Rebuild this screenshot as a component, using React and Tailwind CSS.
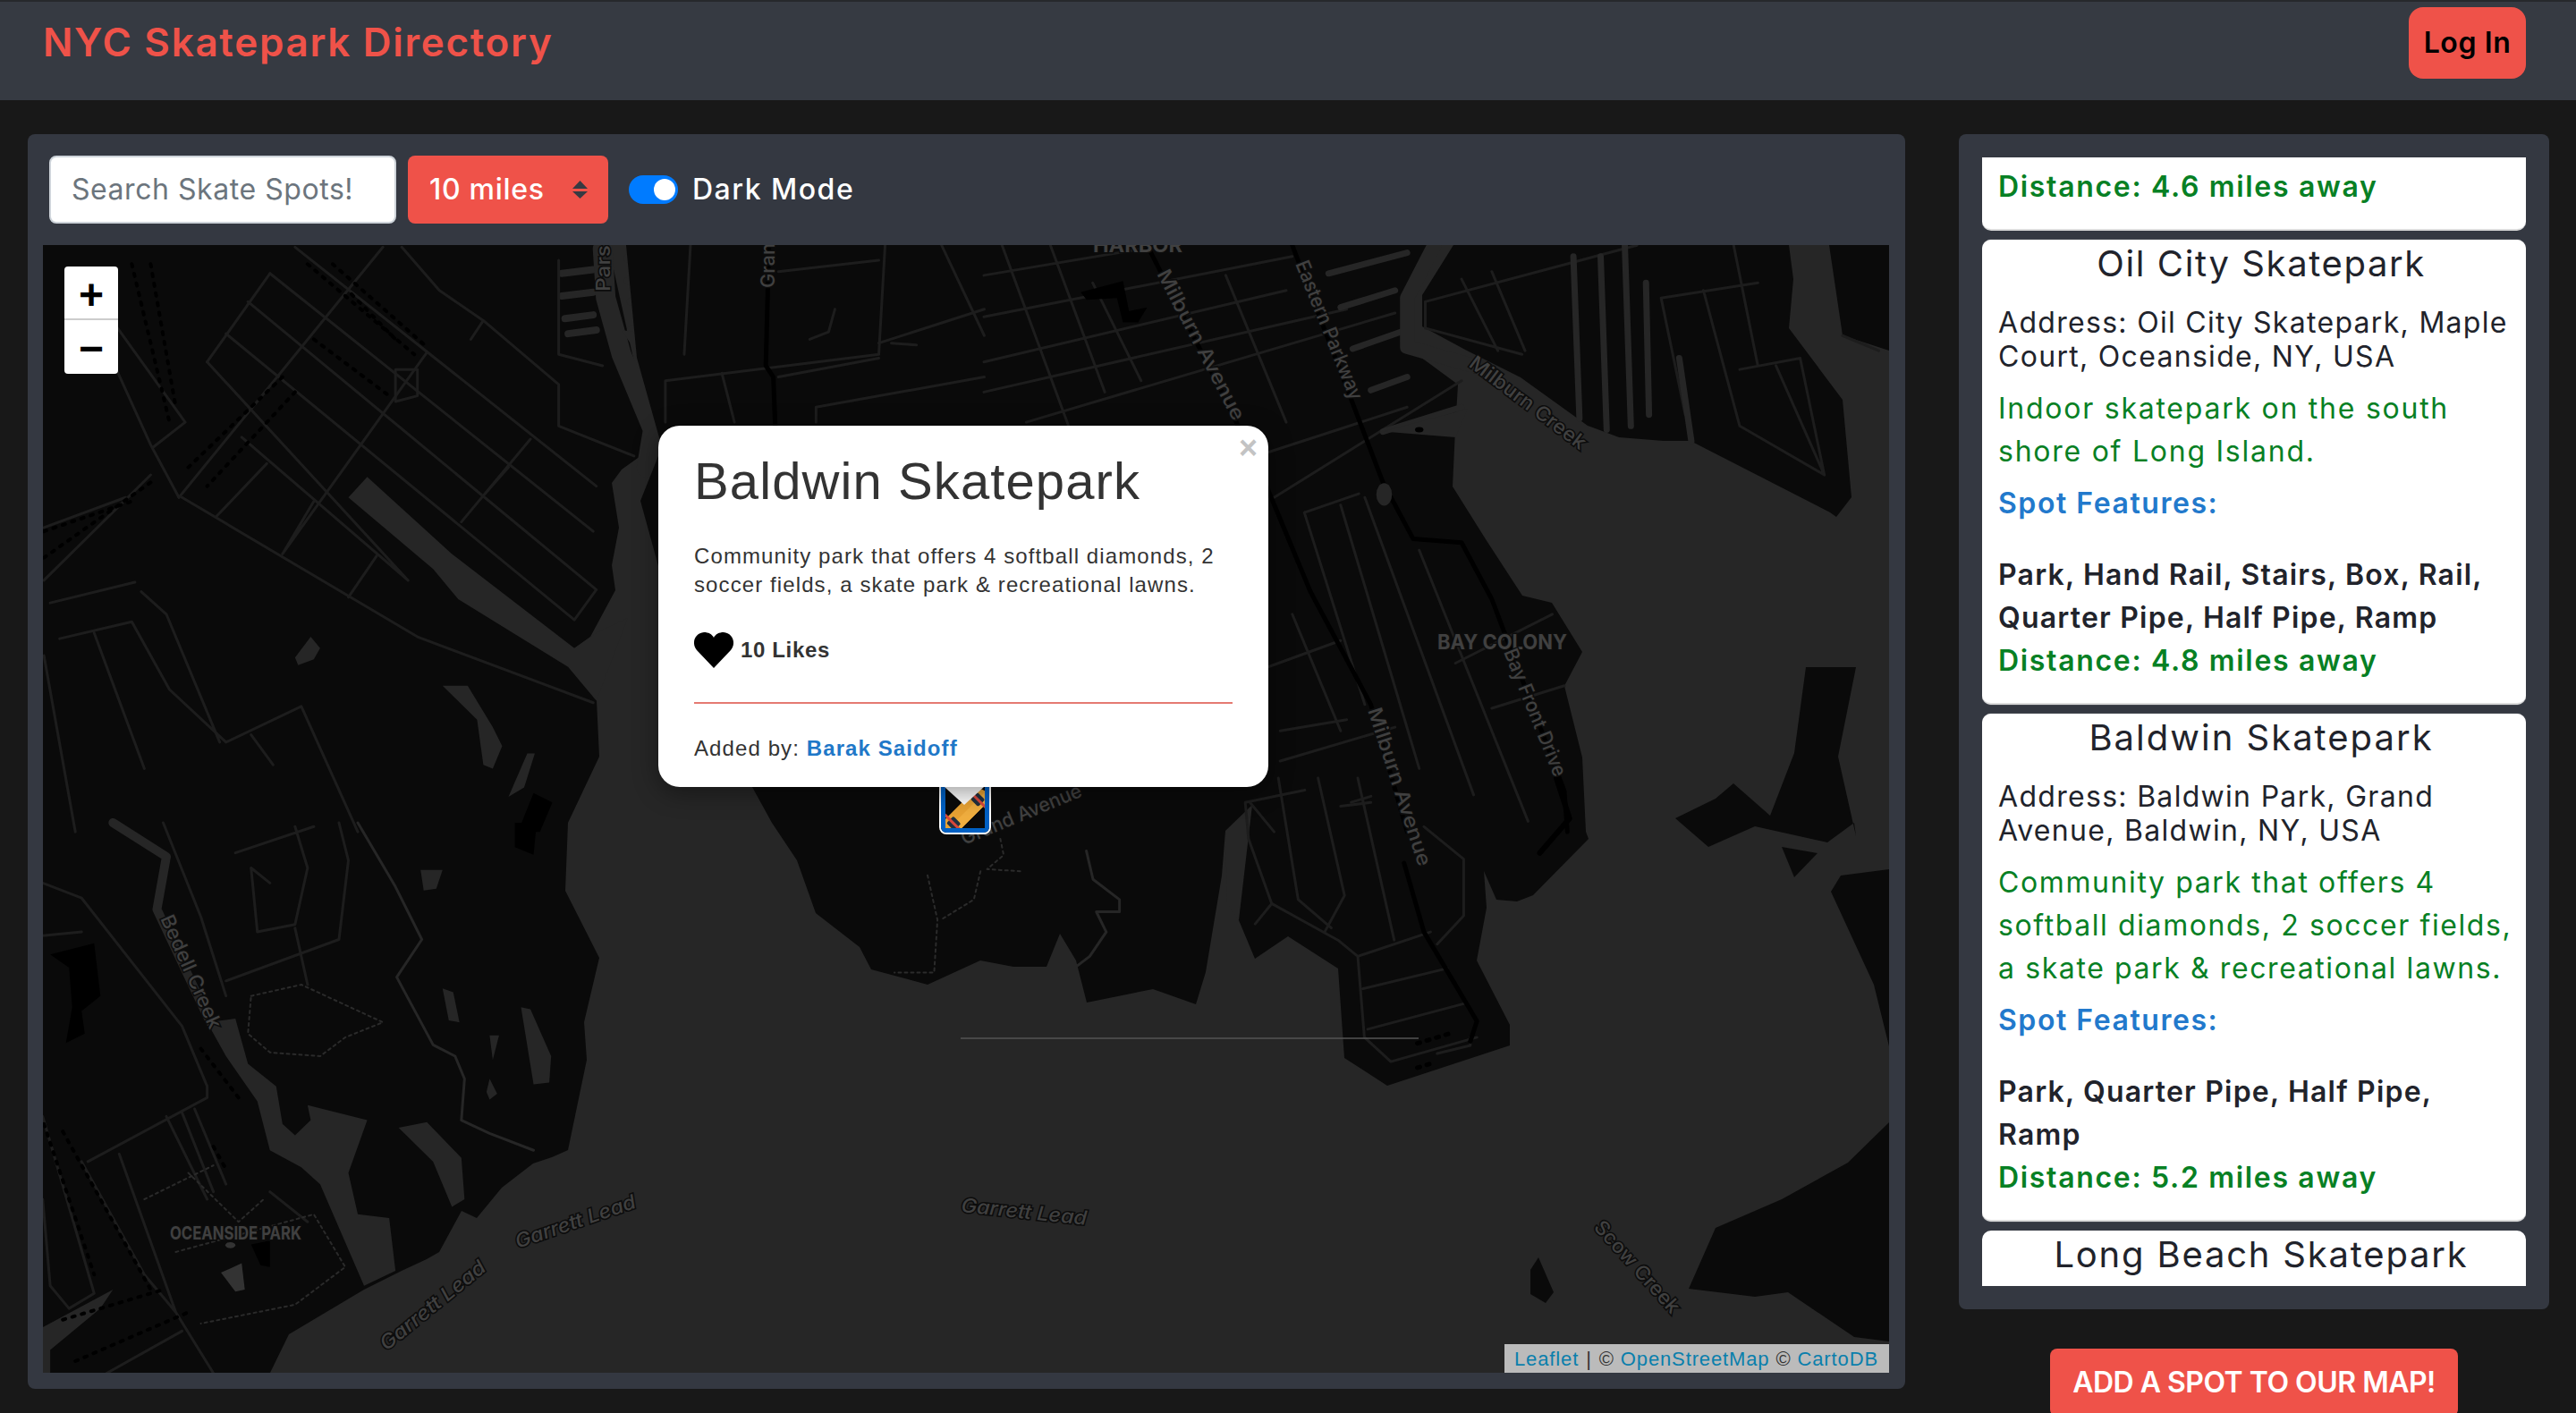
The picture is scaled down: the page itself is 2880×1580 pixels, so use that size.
import React from "react";

const Z5 = "translate(0,270) scale(0.7018,0.421)";
const Z6 = "translate(0,920) scale(0.7018,0.421)";
const Z7 = "translate(1100,270) scale(0.676,0.421)";
const Z8 = "translate(1000,870) scale(0.74,0.453)";

const LAND = "#0a0a0a";
const WATER = "#262626";
const ROAD = "#1d1d1d";

function P({ d, c = ROAD, w = 3, dash }) {
  return <path d={d} fill="none" stroke={c} strokeWidth={w} strokeDasharray={dash} strokeLinejoin="round" strokeLinecap="round" vectorEffect="non-scaling-stroke" />;
}

function Poly({ pts, c = LAND }) {
  return <polygon points={pts} fill={c} vectorEffect="non-scaling-stroke" />;
}

function Label({ x, y, r = 0, len, size = 22, italic, bold, children, c = "#404040" }) {
  return (
    <text x={x} y={y} transform={`rotate(${r} ${x} ${y})`} textLength={len} lengthAdjust="spacingAndGlyphs" fontFamily="Inter, sans-serif" fontSize={size} fontStyle={italic ? "italic" : "normal"} fontWeight={bold ? 700 : 500} fill={c} stroke="#0c0c0c" strokeWidth="3" paintOrder="stroke">{children}</text>
  );
}

function MapArt() {
  return (
    <svg viewBox="48 274 2064 1261" className="block w-full h-full" preserveAspectRatio="none">
      <rect x="48" y="274" width="2064" height="1261" fill={WATER} />
      {/* west land */}
      <Poly pts="48,274 680,274 730,500 695,525 684,540 692,590 684,632 688,660 660,712 642,725 667,783 670,846 635,920 632,996 670,1071 653,1143 656,1185 635,1286 617,1294 596,1301 561,1328 533,1362 516,1354 491,1400 477,1408 449,1421 407,1442 323,1492 302,1535 48,1535" />
      <g transform={Z6}>
        <Poly c={WATER} pts="330,530 375,520 395,640 440,700 450,800 470,830 495,790 490,750 585,790 555,930 570,1040 620,1050 630,1190 580,1230 510,960 480,915 430,870 410,740 360,620" />
        <Poly c={WATER} pts="635,810 680,795 735,890 740,1000 720,1020 690,900" />
        <Poly c={WATER} pts="68,1340 180,1240 160,1290 80,1400 80,1462 68,1462" />
        <Poly c={WATER} pts="670,125 705,125 695,175 675,180" />
        <Poly c={WATER} pts="705,440 722,450 732,530 715,525" />
        <Poly c={WATER} pts="830,490 845,495 878,620 875,690 850,695" />
        <Poly c={WATER} pts="780,565 795,565 785,630" />
        <Poly c={WATER} pts="780,680 792,720 780,735 775,715" />
        <P c={WATER} w={10} d="M180,0 L265,90 L250,230 L335,530" />
        <P c={WATER} w={3} d="M570,0 L630,170 L672,310 L632,410 L690,590 L725,620 L740,680 L735,790 L780,825 L850,870" />
      </g>
      <g transform={Z5}>
        <Poly c={WATER} pts="585,625 555,680 690,870 730,950 905,1130 950,1220 1000,1000 950,1040 915,1080 720,830" />
        <Poly c={WATER} pts="470,1105 495,1050 510,1080 500,1110 475,1125" />
        <Poly c={WATER} pts="705,1180 745,1180 785,1290 800,1340 785,1400 770,1390 760,1270" />
        <Poly c={WATER} pts="840,1360 852,1360 835,1450 810,1475" />
        <Poly c={"#000"} pts="850,1465 880,1490 860,1568 825,1568" />
        <P c={WATER} w={8} d="M895,85 L945,75 M895,145 L945,135 M900,205 L945,195 M905,245 L950,235" />
        <P c={WATER} w={9} d="M1000,45 L1075,25 M1000,105 L1090,90 M1005,160 L1110,130 M1005,235 L1090,210" />
        <P c={WATER} w={22} d="M960,20 L965,150 L990,300 L1040,500 L1030,600" />
        <Poly c={WATER} pts="990,235 1115,265 1125,305 1020,310" />
      </g>
      {/* middle land */}
      <Poly pts="700,274 1604,274 1573,333 1573,388 1630,430 1627,480 1624,544 1661,603 1702,666 1735,674 1769,729 1749,767 1769,847 1773,930 1776,938 1714,1001 1696,1008 1673,1006 1659,974 1662,1015 1651,1074 1688,1146 1688,1169 1551,1214 1503,1183 1496,1083 1440,1047 1403,1072 1385,1029 1370,929 1366,979 1348,1087 1337,1123 1289,1106 1215,1121 1203,1074 1185,1044 1170,1081 1133,1081 1096,1074 1037,1101 974,1084 961,1059 912,1021 891,962 863,920 830,860 760,720 716,560 740,500 712,400" />
      {/* NE blocks */}
      <Poly pts="1625,274 1590,330 1590,365 1640,392 1700,422 1775,476 1810,489 1860,493 1890,493 2046,573 2053,578 2070,556 2060,447 2000,367 2005,312 2000,274" />
      <Poly pts="2045,274 2060,375 2112,392 2112,274" />
      <Poly pts="2019,746 2075,746 2055,846 2075,935 2073,920 2043,942 1962,924 1910,947 1873,915 1918,893 1938,876 1979,912 2006,842" />
      <Poly pts="2112,1255 2066,1300 1992,1341 1918,1373 1888,1441 1962,1450 1999,1445 2073,1495 2112,1500" />
      <Poly pts="2112,972 2058,979 2047,997 2095,1101 2112,1170" />
      <Poly pts="1992,947 2032,954 2006,981" />
      <Poly pts="1720,1406 1737,1445 1728,1457 1711,1447 1711,1420" />
      <Poly c={WATER} pts="1370,929 1400,900 1385,1029 1372,1010" />

      {/* roads west */}
      <g transform={Z5}>
        <P d="M470,15 L950,650 M430,85 L945,770 M395,160 L950,925 L915,1005 M360,245 L915,1005 M330,320 L650,900 M385,520 L650,900 M290,680 L665,1050 L945,1225" />
        <P d="M610,15 L285,680 M680,295 L450,830 M845,525 L735,745 M430,85 L330,320 M425,590 L345,730 M500,690 L450,830 M600,835 L555,945 M810,600 L770,675" />
        <P d="M640,15 L700,130 L770,210 L890,380 L890,490 L1010,570 M770,210 L750,260 M630,340 L665,340 L665,410 L630,425 Z" />
        <P d="M185,225 L295,480 L245,545 M180,320 L240,540 L285,680 M70,900 L240,620 M70,760 L200,680 M80,960 L215,905 M95,1055 L210,1010 L270,1190 L360,1330 L480,1235 L570,1568 M150,1040 L230,1400 M225,930 L265,990 L350,1330 M70,1100 L120,1568 M400,1310 L435,1390" />
        <P d="M890,50 L890,300 L960,330 M1060,370 L1400,300 M1240,360 L1400,310 M1100,10 L1090,300 M1410,10 L1400,300 M1500,10 L1568,250 M1240,80 L1400,50 M1400,270 L1568,180 M1420,270 L1460,275 M1330,180 L1320,240 L1290,260 M1150,350 L1170,480 M1060,370 L1060,480 M1300,480 L1300,440 L1568,360" />
        <P c="#000" w={5} d="M1225,10 L1220,330 L1232,360 L1235,490" />
        <P c="#000" w={4} dash="3 8" d="M490,60 L660,300 M530,60 L680,280 M450,360 L300,600 M470,400 L330,650 M70,770 L210,690 M70,840 L240,640 M210,60 L270,480 M240,60 L280,440 M560,140 L630,260 M500,260 L620,410" />
      </g>
      <g transform={Z6}>
        <P d="M68,160 L130,200 L290,540 L330,700 L330,730 L140,900 M260,0 L320,250 L360,460 M360,420 L540,310 L555,100 L540,0 M400,120 L410,290 L470,270 L490,120 L470,10 M470,280 L490,430 M375,80 L500,10 M68,300 L130,290 M68,780 L150,1250 L110,1290 L80,1230 L68,1000 M190,880 L280,1300 L340,1462 M130,900 L230,1200 L280,1300 M265,780 L330,1000 M290,770 L340,980 M310,760 L360,960 M430,980 L490,1060 M400,120 L430,160 M170,1462 L290,1350" />
        <P c="#000" w={4} dash="3 8" d="M320,600 L380,730 M70,800 L150,1200 M100,820 L240,1240 M100,1320 L260,1240 M120,1430 L300,1300 M340,860 L360,920" />
        <P c="#2a2a2a" w={2} dash="3 4" d="M400,460 L480,430 L610,530 L550,570 L510,620 L430,610 L395,560 Z M230,1000 L340,910 M300,930 L380,1060 L420,1000 M280,1140 L500,1040 L550,1180 L470,1280 L320,1330" />
        <Poly c="#000" pts="80,350 150,320 160,460 130,500 135,560 105,585 115,490 110,385" />
        <Poly c="#000" pts="820,0 855,0 850,85 820,65" />
        <Poly c="#000" pts="400,1120 430,1110 430,1180 415,1175" />
        <Poly c="#333" pts="352,1195 385,1170 390,1240 375,1245" />
        <circle cx="367" cy="1122" r="8" fill="#333" />
      </g>
      {/* roads centre */}
      <g transform={Z7}>
        <P d="M0,90 L260,20 M0,200 L510,40 M0,320 L500,130 M0,400 L600,180 M70,480 L680,190 M480,680 L790,370 M470,560 L700,440 M30,10 L140,490 M110,10 L200,400 M180,110 L260,370 M400,90 L500,480" />
        <P d="M530,720 L620,670 M590,700 L720,1400 M630,680 L810,1470 M530,720 L630,1230 M720,820 L900,1540 M470,1130 L590,1060 M490,1380 L680,1290 M840,1240 L960,1180 M780,1120 L940,990 M590,1500 L640,1490 M440,1490 L480,1568 M490,1300 L600,1270 M510,990 L590,1300" />
        <P d="M730,160 L1080,10 M730,160 L730,230 L890,300 M790,100 L850,290 M840,80 L895,290 M1120,150 L1280,110 M1250,340 L1350,310 M1120,150 L1160,460 M1190,130 L1250,490 L1390,620 L1350,310 M1310,330 L1390,620 M1240,10 L1280,330 M1420,250 L1480,290" />
        <P c={WATER} w={7} d="M975,40 L985,470 M1095,110 L1100,460 M1150,310 L1170,530 M1020,40 L1030,500 M1060,10 L1070,490 M570,85 L700,30 M590,175 L680,130 M610,285 L690,240 M640,395 L700,360 M660,505 L790,440" />
        <Poly c={WATER} pts="660,505 800,445 780,520" />
        <P c={WATER} w={16} d="M745,10 L700,150 L700,280 L810,330" />
        <P c="#000" w={5} d="M270,10 L400,420 L470,660 L540,930 L640,1230 L700,1568" />
        <P c="#000" w={5} d="M510,10 L660,640 L710,790 L790,800 L840,950 L960,1460 L965,1568" />
        <ellipse cx="662" cy="672" rx="13" ry="30" fill="#262626" />
        <circle cx="720" cy="500" r="7" fill="#000" />
        <Poly c="#000" pts="160,135 230,105 240,185 270,175 255,215 230,215 220,150 170,155" />
      </g>
      <g transform={Z8}>
        <P d="M530,60 L535,150 L570,310 L670,400 L700,440 L710,640 L750,700 L880,640 M580,0 L610,300 L660,370 M640,0 L680,290 L650,380 M700,0 L755,400 M700,440 L810,380 M708,520 L835,470 M715,620 L865,555 M800,120 L860,200 L860,340 L820,410 M545,360 L570,310 M690,60 L720,45 M530,60 L620,30 M820,680 L870,660 L870,640" />
        <P c="#000" w={5} d="M770,210 L800,380 L880,600 L870,650" />
        <P c="#000" w={6} d="M975,185 L1020,100 L1000,0" />
        <P c="#2b2b2b" w={2} dash="3 4" d="M160,150 L165,190 L140,225 L190,230 M130,230 L120,300 L70,350 M50,240 L65,350 L60,480 L0,480" />
        <P c={WATER} w={3} d="M290,180 L300,250 L340,300 L340,330 L305,330 L320,380 L295,440 L275,465" />
        <P c="#000" w={5} dash="3 8" d="M790,655 L840,630 M790,715 L810,705" />
      </g>
      <path d="M1074,1161 L1586,1161" stroke="#555" strokeWidth="1.5" />

      <Label x={1222} y={282} len={100} bold size={22}>HARBOR</Label>
      <Label x={682} y={326} r={-90} len={52}>Pars</Label>
      <Label x={866} y={322} r={-90} len={50}>Gran</Label>
      <Label x={1293} y={306} r={62.5} len={187}>Milburn Avenue</Label>
      <Label x={1448} y={295} r={68} len={166}>Eastern Parkway</Label>
      <Label x={1641} y={409} r={37} len={157}>Milburn Creek</Label>
      <Label x={1607} y={726} len={145} bold size={23}>BAY COLONY</Label>
      <Label x={1681} y={729} r={68} len={152}>Bay Front Drive</Label>
      <Label x={1529} y={794} r={72} len={185}>Milburn Avenue</Label>
      <Label x={1078} y={945} r={-22.5} len={144}>Grand Avenue</Label>
      <Label x={179} y={1027} r={66} len={137}>Bedell Creek</Label>
      <Label x={190} y={1386} len={147} bold size={20}>OCEANSIDE PARK</Label>
      <Label x={579} y={1396} r={-19} len={141} italic>Garrett Lead</Label>
      <Label x={432} y={1511} r={-39} len={145} italic>Garrett Lead</Label>
      <Label x={1074} y={1355} r={6} len={141} italic>Garrett Lead</Label>
      <Label x={1781} y={1373} r={48} len={131}>Scow Creek</Label>
    </svg>
  );
}

function Skateboard() {
  return (
    <svg viewBox="0 0 44 47" preserveAspectRatio="none" className="block w-full h-full">
      <rect width="44" height="47" fill="#0a0a0a" />
      <g transform="rotate(45 23 28)">
        <rect x="13" y="-3" width="20" height="62" rx="10" fill="#e8a233" />
        <path d="M23,-3 h5 a5,10 0 0 1 5,10 v42 a5,10 0 0 1 -5,10 h-5 z" fill="#f3b445" opacity="0.7" />
        <rect x="17" y="4" width="12" height="11" rx="2" fill="#22303f" />
        <rect x="17" y="42" width="12" height="11" rx="2" fill="#22303f" />
        <rect x="9" y="8" width="28" height="3" fill="#d9483b" />
        <rect x="9" y="46" width="28" height="3" fill="#d9483b" />
      </g>
    </svg>
  );
}

function Card({ title, titleTrack, address, desc, features, distance, descTrack = "tracking-[1.75px]" }) {
  return (
    <div className="mt-[10px] bg-white rounded-[10px] border-b-2 border-[#dcdcdc] pl-[18px] text-[#21232b] whitespace-nowrap shadow-[0_0_1px_rgba(255,255,255,0.8)]">
      <div className={`pt-[3px] pl-[16px] pr-[18px] text-center text-[40px] leading-[48px] ${titleTrack}`}>{title}</div>
      <div className="mt-[23px] text-[32px] leading-[38px] tracking-[1.3px]">{address}</div>
      <div className={`mt-[15px] text-[32px] leading-[48px] text-[#078024] ${descTrack}`}>{desc}</div>
      <div className="mt-[10px] text-[32px] leading-[48px] font-semibold tracking-[1.55px] text-[#2279cc]">Spot Features:</div>
      <div className="mt-[32px] text-[32px] leading-[48px] font-semibold tracking-[1.2px]">{features}</div>
      <div className="text-[32px] leading-[48px] pb-[23px] font-semibold tracking-[1.67px] text-[#078024]">{distance}</div>
    </div>
  );
}

export default function App() {
  return (
    <div className="w-[2880px] h-[1580px] overflow-hidden bg-[#181818] font-['Inter',sans-serif]">
      <header className="h-[112px] border-t-2 border-[#26282c] bg-[#363a42] flex items-start justify-between pl-[48px] pr-[56px]">
        <div className="mt-[20px] text-[44px] leading-[50px] font-semibold text-[#ef5249] tracking-[1.7px]">NYC Skatepark Directory</div>
        <button className="mt-[6px] w-[131px] h-[80px] rounded-[16px] bg-[#ef5249] text-black text-[32px] font-semibold tracking-[0.6px]">Log In</button>
      </header>
      <main className="flex items-start">
        <section className="ml-[31px] mt-[38px] w-[2099px] h-[1403px] rounded-[8px] bg-[#343841] pl-[17px] pr-[18px] flex flex-col">
          <div className="h-[124px] flex items-center pl-[7px]">
            <div className="w-[388px] h-[76px] rounded-[8px] border-2 border-[#ced4da] bg-white pl-[23px] flex items-center text-[32px] text-[#6c757d] tracking-[0.55px]">Search Skate Spots!</div>
            <div className="ml-[13px] w-[224px] h-[76px] rounded-[8px] bg-[#ef5249] flex items-center justify-between pl-[24px] pr-[23px] text-white text-[32px] font-medium tracking-[0.7px]">
              <span>10 miles</span>
              <svg width="17" height="20" viewBox="0 0 17 20" fill="#363a42"><path d="M8.5 0 L17 9 H0 Z M0 12 H17 L8.5 20 Z" /></svg>
            </div>
            <div className="ml-[23px] w-[55px] h-[32px] rounded-full bg-[#007bff] relative">
              <div className="absolute right-[3px] top-[4px] w-[24px] h-[24px] rounded-full bg-white" />
            </div>
            <div className="ml-[16px] text-[32px] font-medium text-white tracking-[1.5px]">Dark Mode</div>
          </div>
          <div className="relative w-[2064px] h-[1261px] overflow-hidden">
            <MapArt />
            <div className="absolute left-[24px] top-[24px] w-[60px] h-[120px] rounded-[4px] bg-white flex flex-col text-black font-['Liberation_Sans',sans-serif] font-bold">
              <div className="h-[60px] pt-[6px] border-b-2 border-[#ccc] flex items-center justify-center text-[48px] leading-none">+</div>
              <div className="h-[60px] pt-[4px] flex items-center justify-center text-[48px] leading-none">−</div>
            </div>

            {/* marker */}
            <div className="absolute left-[1002px] top-[598px] w-[58px] h-[61px] rounded-[8px] border-2 border-white overflow-hidden">
              <div className="w-full h-full border-[5px] border-[#0061c5] rounded-[5px] overflow-hidden"><Skateboard /></div>
            </div>
            <svg className="absolute left-[1008px] top-[606px]" width="44" height="22" viewBox="0 0 44 22"><path d="M0 0 H44 L22 20 Z" fill="#fff" /></svg>

            {/* popup */}
            <div className="absolute left-[688px] top-[202px] w-[682px] h-[404px] rounded-[24px] bg-white text-[#333] font-['Liberation_Sans',sans-serif] shadow-[0_6px_28px_rgba(0,0,0,0.4)]">
              <div className="absolute right-[12px] top-[7px] text-[36px] leading-[36px] font-bold text-[#c3c3c3]">×</div>
              <div className="pl-[40px] pt-[26px] text-[58px] leading-[72px] tracking-[1.1px] whitespace-nowrap">Baldwin Skatepark</div>
              <div className="pl-[40px] mt-[32px] text-[24px] leading-[32px] tracking-[1.1px] whitespace-nowrap">Community park that offers 4 softball diamonds, 2<br />soccer fields, a skate park &amp; recreational lawns.</div>
              <div className="pl-[40px] mt-[37px] h-[40px] flex items-center">
                <svg width="44" height="40" viewBox="0 0 44 40" fill="#000"><path d="M22 40 L3 20 C-3 13 0 1 11 0 C16 0 20 2 22 6 C24 2 28 0 33 0 C44 1 47 13 41 20 Z" /></svg>
                <span className="ml-[8px] text-[24px] font-bold tracking-[0.65px]">10 Likes</span>
              </div>
              <div className="ml-[40px] mt-[38px] w-[602px] h-[2px] bg-[#e57a72]" />
              <div className="pl-[40px] mt-[34px] text-[24px] leading-[32px] tracking-[1.1px] whitespace-nowrap">Added by: <span className="font-bold text-[#1f78c8]">Barak Saidoff</span></div>
            </div>

            <div className="absolute right-0 bottom-0 h-[32px] w-[430px] bg-[#bbbbbb] pl-[11px] flex items-center text-[22px] text-[#333] font-['Liberation_Sans',sans-serif] tracking-[0.87px] whitespace-nowrap">
              <span className="text-[#0a7fac]">Leaflet</span><span className="mx-[8px]">|</span><span>©&nbsp;</span><span className="text-[#0a7fac]">OpenStreetMap</span><span>&nbsp;©&nbsp;</span><span className="text-[#0a7fac]">CartoDB</span>
            </div>
          </div>
        </section>

        <div className="ml-[60px] w-[660px] mt-[38px] flex flex-col items-center">
          <aside className="w-full h-[1314px] rounded-[8px] bg-[#343841] pt-[26px] px-[26px]">
            <div className="h-[1262px] overflow-hidden">
              <div className="h-[82px] bg-white rounded-b-[10px] border-b-2 border-[#dcdcdc] pl-[18px] pt-[9px] text-[32px] leading-[48px] font-semibold tracking-[1.67px] text-[#078024] whitespace-nowrap">Distance: 4.6 miles away</div>
              <Card
                title="Oil City Skatepark"
                titleTrack="tracking-[1.6px]"
                address={<>Address: Oil City Skatepark, Maple<br />Court, Oceanside, NY, USA</>}
                desc={<>Indoor skatepark on the south<br />shore of Long Island.</>}
                features={<>Park, Hand Rail, Stairs, Box, Rail,<br />Quarter Pipe, Half Pipe, Ramp</>}
                distance="Distance: 4.8 miles away"
              />
              <Card
                title="Baldwin Skatepark"
                titleTrack="tracking-[2px]"
                descTrack="tracking-[1.6px]"
                address={<>Address: Baldwin Park, Grand<br />Avenue, Baldwin, NY, USA</>}
                desc={<>Community park that offers 4<br />softball diamonds, 2 soccer fields,<br />a skate park &amp; recreational lawns.</>}
                features={<>Park, Quarter Pipe, Half Pipe,<br />Ramp</>}
                distance="Distance: 5.2 miles away"
              />
              <div className="mt-[10px] h-[80px] bg-white rounded-t-[10px] pt-[3px] pl-[34px] pr-[18px] text-center text-[40px] leading-[48px] tracking-[1.8px] text-[#21232b] whitespace-nowrap">Long Beach Skatepark</div>
            </div>
          </aside>
          <button className="mt-[44px] w-[456px] h-[76px] rounded-[8px] bg-[#ef5249] text-white text-[32px] font-semibold tracking-[-0.5px] whitespace-nowrap">ADD A SPOT TO OUR MAP!</button>
        </div>
      </main>
    </div>
  );
}
